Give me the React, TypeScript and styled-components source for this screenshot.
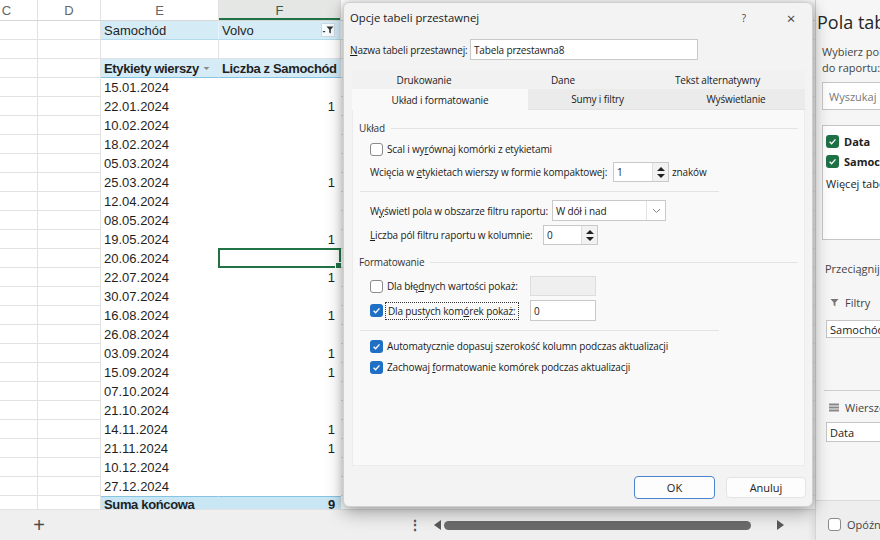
import React from "react";
import styled, { createGlobalStyle, css } from "styled-components";

const GlobalStyle = createGlobalStyle`
  html, body {
    margin: 0;
    padding: 0;
  }
  body {
    width: 880px;
    height: 540px;
    overflow: hidden;
    background: #efefef;
    font-family: "Liberation Sans", Arial, sans-serif;
  }
`;

const Screen = styled.div`
  position: relative;
  width: 880px;
  height: 540px;
  overflow: hidden;
  display: flex;
`;

/* ---------- spreadsheet ---------- */

const Workbook = styled.div`
  width: 815px;
  flex-shrink: 0;
  display: flex;
  flex-direction: column;
`;

const SheetViewport = styled.div`
  height: 509px;
  overflow: hidden;
  background: #ffffff;
`;

// scrolled canvas: column C is only partly visible
const SheetGrid = styled.div`
  margin-left: -24px;
`;

const COLS = "62px 63px 118px 122px 520px";

const HeaderRow = styled.div`
  display: grid;
  grid-template-columns: ${COLS};
  height: 21px;
  box-sizing: border-box;
  border-bottom: 1px solid #d6d6d6;
`;

const ColHead = styled.div<{ $active?: boolean }>`
  display: flex;
  align-items: center;
  justify-content: center;
  font-size: 13px;
  color: #666666;
  border-right: 1px solid #e1e1e1;
  ${(p) =>
    p.$active &&
    css`
      background: #e4e7e4;
      color: #3b5a46;
      box-shadow: inset 0 -2px 0 #217346;
    `}
`;

const Row = styled.div`
  display: grid;
  grid-template-columns: ${COLS};
  height: 19px;
`;

type Tone = "grid" | "data" | "filter" | "head" | "total";

const Cell = styled.div<{ $tone?: Tone; $right?: boolean }>`
  position: relative;
  box-sizing: border-box;
  display: flex;
  align-items: center;
  justify-content: ${(p) => (p.$right ? "flex-end" : "flex-start")};
  padding: 0 5px 0 3px;
  font-size: 13px;
  color: #1f1f1f;
  white-space: nowrap;
  border-right: 1px solid #e2e2e2;
  border-bottom: 1px solid #e2e2e2;
  ${(p) =>
    p.$tone === "data" &&
    css`
      border-color: #ffffff;
    `}
  ${(p) =>
    p.$tone === "filter" &&
    css`
      background: #d5ecf7;
      border-right-color: #e6f4fb;
      border-bottom-color: #b3dbee;
    `}
  ${(p) =>
    p.$tone === "head" &&
    css`
      background: #d5ecf7;
      font-weight: bold;
      letter-spacing: -0.35px;
      border-right-color: #d5ecf7;
      border-bottom-color: #86c4e3;
    `}
  ${(p) =>
    p.$tone === "total" &&
    css`
      background: #c9e6f4;
      font-weight: bold;
      letter-spacing: -0.35px;
      border-top: 1px solid #86c4e3;
      border-right-color: #c9e6f4;
      padding-bottom: 2px;
    `}
`;

const CellButton = styled.span<{ $boxed?: boolean }>`
  margin-left: auto;
  width: 14px;
  height: 14px;
  display: flex;
  align-items: center;
  justify-content: center;
  box-sizing: border-box;
  ${(p) =>
    p.$boxed &&
    css`
      background: #f6fbfe;
      border: 1px solid #c9d9e2;
    `}
`;

const SelectionBox = styled.span`
  position: absolute;
  inset: -1px -1px -1px -1px;
  border: 2px solid #217346;
  pointer-events: none;
`;

const FillHandle = styled.span`
  position: absolute;
  right: -3px;
  bottom: -3px;
  width: 5px;
  height: 5px;
  background: #217346;
  border: 1px solid #ffffff;
`;

const BottomBar = styled.div`
  flex: 1;
  display: flex;
  align-items: center;
  background: #efefef;
  border-top: 1px solid #e2e2e2;
  color: #555555;
`;

const AddSheet = styled.span`
  width: 20px;
  margin-left: 29px;
  text-align: center;
  font-size: 20px;
  font-weight: 300;
  color: #4a4a4a;
  line-height: 20px;
`;

const ScrollGroup = styled.div`
  margin-left: auto;
  width: 407px;
  display: flex;
  align-items: center;
`;

const Dots = styled.span`
  width: 8px;
  text-align: center;
  font-size: 14px;
  font-weight: bold;
  color: #555;
`;

const Arrow = styled.span<{ $dir: "left" | "right"; $gap: number }>`
  margin-left: ${(p) => p.$gap}px;
  width: 0;
  height: 0;
  border-top: 5px solid transparent;
  border-bottom: 5px solid transparent;
  ${(p) =>
    p.$dir === "left"
      ? css`
          border-right: 7px solid #5a5a5a;
        `
      : css`
          border-left: 7px solid #5a5a5a;
        `}
`;

const ScrollThumb = styled.span`
  margin-left: 3px;
  width: 307px;
  height: 9px;
  border-radius: 5px;
  background: #6b6b6b;
`;

/* ---------- field list pane ---------- */

const FieldPane = styled.aside`
  width: 65px;
  flex-shrink: 0;
  box-sizing: border-box;
  background: #f6f6f6;
  border-left: 1px solid #d4d4d4;
  box-shadow: -3px 0 6px rgba(0, 0, 0, 0.08);
  overflow: hidden;
  display: flex;
  flex-direction: column;
  font-family: "Open Sans", "Noto Sans", sans-serif;
  color: #333333;
  white-space: nowrap;
`;

const PaneBody = styled.div`
  width: 280px;
  padding-left: 6px;
  display: flex;
  flex-direction: column;
`;

const PaneTitle = styled.div`
  margin: 9px 0 0 -5px;
  font-size: 18px;
  line-height: 26px;
  color: #262626;
`;

const PaneHint = styled.div`
  margin-top: 9px;
  font-size: 11px;
  line-height: 16px;
  color: #444;
`;

const SearchBox = styled.div`
  margin-top: 6px;
  height: 28px;
  box-sizing: border-box;
  border: 1px solid #c6c6c6;
  background: #ffffff;
  display: flex;
  align-items: center;
  padding-left: 6px;
  font-size: 11px;
  color: #777;
`;

const FieldList = styled.div`
  margin-top: 15px;
  height: 115px;
  box-sizing: border-box;
  border: 1px solid #c6c6c6;
  background: #ffffff;
  padding: 5px 0 0 3px;
`;

const FieldItem = styled.div<{ $bold?: boolean; $top?: number }>`
  height: 20px;
  margin-top: ${(p) => p.$top ?? 0}px;
  display: flex;
  align-items: center;
  gap: 5px;
  font-size: 11px;
  font-weight: ${(p) => (p.$bold ? 700 : 400)};
  color: #222;
`;

const AreaLabel = styled.div<{ $top: number; $indent: number }>`
  margin-top: ${(p) => p.$top}px;
  padding-left: ${(p) => p.$indent}px;
  height: 18px;
  display: flex;
  align-items: center;
  gap: 6px;
  font-size: 11px;
  color: #444;
`;

const AreaBox = styled.div<{ $top: number; $h: number }>`
  margin: ${(p) => p.$top}px 0 0 4px;
  height: ${(p) => p.$h}px;
  box-sizing: border-box;
  border: 1px solid #c6c6c6;
  background: #ffffff;
  display: flex;
  align-items: center;
  padding-left: 3px;
  font-size: 11px;
  color: #222;
`;

const PaneRule = styled.div`
  margin: 52px 0 0 2px;
  height: 1px;
  background: #cfcfcf;
`;

const PaneFooter = styled.div`
  margin-top: auto;
  height: 40px;
  box-sizing: border-box;
  border-top: 1px solid #dadada;
  background: #eeeeee;
  display: flex;
  align-items: center;
  gap: 6px;
  padding: 8px 0 0 12px;
  font-size: 11px;
  color: #444;
`;

/* ---------- dialog ---------- */

const Dialog = styled.div`
  position: absolute;
  left: 343px;
  top: 2px;
  width: 470px;
  height: 505px;
  box-sizing: border-box;
  background: #f3f3f3;
  border: 1px solid #d0d0d0;
  border-radius: 6px;
  box-shadow: 0 6px 18px rgba(0, 0, 0, 0.3), 0 0 8px rgba(0, 0, 0, 0.18);
  display: flex;
  flex-direction: column;
  font-family: "Open Sans", "Noto Sans", sans-serif;
  font-size: 10px;
  letter-spacing: -0.15px;
  color: #1b1b1b;
`;

const TitleBar = styled.div`
  height: 29px;
  display: flex;
  align-items: center;
  padding: 0 6px 0 6px;
  font-size: 11.3px;
  letter-spacing: 0;
  color: #1a1a1a;
`;

const TitleButton = styled.span<{ $size: number; $gap?: number }>`
  width: 30px;
  margin-right: ${(p) => p.$gap ?? 0}px;
  text-align: center;
  font-size: ${(p) => p.$size}px;
  color: #444;
`;

const Spacer = styled.span`
  flex: 1;
`;

const NameRow = styled.div`
  margin-top: 7px;
  height: 21px;
  display: flex;
  align-items: center;
  padding-left: 6px;
`;

const TextField = styled.div<{ $w: number; $h?: number; $disabled?: boolean }>`
  width: ${(p) => p.$w}px;
  height: ${(p) => p.$h ?? 20}px;
  box-sizing: border-box;
  flex-shrink: 0;
  display: flex;
  align-items: center;
  padding-left: 3px;
  background: ${(p) => (p.$disabled ? "#efefef" : "#ffffff")};
  border: 1px solid ${(p) => (p.$disabled ? "#dddddd" : "#c9c9c9")};
`;

const Tabs = styled.div`
  margin: 10px 7px 0 8px;
`;

const TabRow = styled.div<{ $h: number }>`
  display: flex;
  height: ${(p) => p.$h}px;
`;

const Tab = styled.div<{ $w: number; $state: "back" | "idle" | "active" }>`
  width: ${(p) => p.$w}px;
  flex-shrink: 0;
  display: flex;
  align-items: center;
  justify-content: center;
  color: #222;
  box-sizing: border-box;
  ${(p) =>
    p.$state === "back" &&
    css`
      background: #f1f1f1;
    `}
  ${(p) =>
    p.$state === "idle" &&
    css`
      background: #ebebeb;
      border-bottom: 1px solid #e2e2e2;
    `}
  ${(p) =>
    p.$state === "active" &&
    css`
      background: #f9f9f9;
    `}
`;

const Panel = styled.div`
  margin: 0 7px 0 8px;
  height: 356px;
  box-sizing: border-box;
  background: #f9f9f9;
  border: 1px solid #ececec;
  border-top: none;
  padding: 0 6px;
  display: flex;
  flex-direction: column;
`;

const GroupTitle = styled.div<{ $top: number }>`
  margin-top: ${(p) => p.$top}px;
  height: 16px;
  display: flex;
  align-items: center;
  gap: 6px;
  color: #333;
  &::after {
    content: "";
    flex: 1;
    border-top: 1px solid #e3e3e3;
  }
`;

const OptionRow = styled.div<{ $top: number; $h?: number; $gap?: number }>`
  margin-top: ${(p) => p.$top}px;
  height: ${(p) => p.$h ?? 20}px;
  display: flex;
  align-items: center;
  gap: ${(p) => p.$gap ?? 4}px;
  padding-left: 11px;
`;

const Label = styled.span<{ $w?: number; $after?: number }>`
  min-width: ${(p) => (p.$w ? `${p.$w}px` : "0")};
  margin-left: ${(p) => p.$after ?? 0}px;
  flex-shrink: 0;
  white-space: nowrap;
`;

const FocusText = styled.span`
  margin-left: -2px;
  padding: 1px 2px;
  border: 1px dotted #333;
`;

const Divider = styled.div<{ $top: number }>`
  margin: ${(p) => p.$top}px 79px 0 1px;
  height: 1px;
  background: #e3e3e3;
`;

const Box = styled.span<{ $checked?: boolean; $green?: boolean }>`
  width: 13px;
  height: 13px;
  flex-shrink: 0;
  box-sizing: border-box;
  border-radius: 3px;
  display: inline-flex;
  align-items: center;
  justify-content: center;
  background: ${(p) => (p.$checked ? (p.$green ? "#1e7145" : "#1f6fc5") : "#ffffff")};
  border: 1px solid ${(p) => (p.$checked ? "transparent" : "#8a8a8a")};
`;

const SpinField = styled.div<{ $w: number }>`
  width: ${(p) => p.$w}px;
  height: 20px;
  flex-shrink: 0;
  box-sizing: border-box;
  display: flex;
  background: #ffffff;
  border: 1px solid #c9c9c9;
`;

const FieldValue = styled.span`
  flex: 1;
  display: flex;
  align-items: center;
  padding-left: 3px;
`;

const SpinButtons = styled.span`
  width: 15px;
  display: flex;
  flex-direction: column;
  align-items: center;
  justify-content: center;
  gap: 3px;
  background: #f2f2f2;
  border-left: 1px solid #dedede;
`;

const Tri = styled.span<{ $up?: boolean }>`
  width: 0;
  height: 0;
  border-left: 4px solid transparent;
  border-right: 4px solid transparent;
  ${(p) =>
    p.$up
      ? css`
          border-bottom: 4px solid #222;
        `
      : css`
          border-top: 4px solid #222;
        `}
`;

const SelectField = styled.div`
  width: 114px;
  height: 21px;
  flex-shrink: 0;
  box-sizing: border-box;
  display: flex;
  background: #ffffff;
  border: 1px solid #c9c9c9;
`;

const SelectChevron = styled.span`
  width: 18px;
  display: flex;
  align-items: center;
  justify-content: center;
  border-left: 1px solid #e3e3e3;
`;

const Footer = styled.div`
  margin-top: 10px;
  display: flex;
  justify-content: flex-end;
  align-items: center;
  gap: 11px;
  padding-right: 6px;
  height: 23px;
`;

const Button = styled.button<{ $primary?: boolean }>`
  width: ${(p) => (p.$primary ? 81 : 80)}px;
  height: ${(p) => (p.$primary ? 23 : 21)}px;
  border-radius: 4px;
  background: #fdfdfd;
  border: 1px solid ${(p) => (p.$primary ? "#4a84cf" : "#e4e4e4")};
  font-family: inherit;
  font-size: 11px;
  color: #222;
  padding: 0;
`;

/* ---------- drawings ---------- */

const Check = ({ size = 9 }: { size?: number }) => (
  <svg width={size} height={size} viewBox="0 0 10 10">
    <polyline points="1.8,5.2 4,7.4 8.3,2.6" fill="none" stroke="#fff" strokeWidth="1.5" />
  </svg>
);

const Funnel = ({ color = "#555" }: { color?: string }) => (
  <svg width="9" height="9" viewBox="0 0 10 10">
    <path d="M0.5 1h9L6 5v4.2L4 8V5z" fill={color} />
  </svg>
);

const FilterGlyph = () => (
  <svg width="12" height="10" viewBox="0 0 12 10">
    <path d="M0.5 6h3L2 7.8z" fill="#333" />
    <path d="M4.5 1.5h7L8.8 4.6v4L7.2 7.6V4.6z" fill="#333" />
  </svg>
);

const SmallArrow = () => (
  <svg width="7" height="5" viewBox="0 0 7 5">
    <path d="M0.5 1h6L3.5 4z" fill="#8a8a8a" />
  </svg>
);

const Chevron = () => (
  <svg width="9" height="6" viewBox="0 0 9 6">
    <polyline points="1,1 4.5,4.5 8,1" fill="none" stroke="#888" strokeWidth="1" />
  </svg>
);

const RowsGlyph = () => (
  <svg width="10" height="9" viewBox="0 0 10 9">
    <rect x="0" y="0.5" width="10" height="2" fill="#888" />
    <rect x="0" y="3.5" width="10" height="2" fill="#888" />
    <rect x="0" y="6.5" width="10" height="2" fill="#888" />
  </svg>
);

/* ---------- data ---------- */

const dates: [string, string][] = [
  ["15.01.2024", ""],
  ["22.01.2024", "1"],
  ["10.02.2024", ""],
  ["18.02.2024", ""],
  ["05.03.2024", ""],
  ["25.03.2024", "1"],
  ["12.04.2024", ""],
  ["08.05.2024", ""],
  ["19.05.2024", "1"],
  ["20.06.2024", ""],
  ["22.07.2024", "1"],
  ["30.07.2024", ""],
  ["16.08.2024", "1"],
  ["26.08.2024", ""],
  ["03.09.2024", "1"],
  ["15.09.2024", "1"],
  ["07.10.2024", ""],
  ["21.10.2024", ""],
  ["14.11.2024", "1"],
  ["21.11.2024", "1"],
  ["10.12.2024", ""],
  ["27.12.2024", ""],
];

const SELECTED = "20.06.2024";

function Sheet() {
  return (
    <SheetViewport>
      <SheetGrid>
        <HeaderRow>
          <ColHead>C</ColHead>
          <ColHead>D</ColHead>
          <ColHead>E</ColHead>
          <ColHead $active>F</ColHead>
          <ColHead />
        </HeaderRow>

        <Row>
          <Cell />
          <Cell />
          <Cell $tone="filter">Samochód</Cell>
          <Cell $tone="filter">
            Volvo
            <CellButton $boxed>
              <FilterGlyph />
            </CellButton>
          </Cell>
          <Cell />
        </Row>
        <Row>
          <Cell />
          <Cell />
          <Cell />
          <Cell />
          <Cell />
        </Row>
        <Row>
          <Cell />
          <Cell />
          <Cell $tone="head">
            Etykiety wierszy
            <CellButton>
              <SmallArrow />
            </CellButton>
          </Cell>
          <Cell $tone="head">Liczba z Samochód</Cell>
          <Cell />
        </Row>

        {dates.map(([d, n]) => (
          <Row key={d}>
            <Cell />
            <Cell />
            <Cell $tone="data">{d}</Cell>
            <Cell $tone="data" $right>
              {n}
              {d === SELECTED && (
                <SelectionBox>
                  <FillHandle />
                </SelectionBox>
              )}
            </Cell>
            <Cell />
          </Row>
        ))}

        <Row>
          <Cell />
          <Cell />
          <Cell $tone="total">Suma końcowa</Cell>
          <Cell $tone="total" $right>
            9
          </Cell>
          <Cell />
        </Row>
      </SheetGrid>
    </SheetViewport>
  );
}

function PivotOptionsDialog() {
  return (
    <Dialog>
      <TitleBar>
        Opcje tabeli przestawnej
        <Spacer />
        <TitleButton $size={10} $gap={17}>
          ?
        </TitleButton>
        <TitleButton $size={15}>×</TitleButton>
      </TitleBar>

      <NameRow>
        <Label $w={120}>
          <u>N</u>azwa tabeli przestawnej:
        </Label>
        <TextField $w={228} $h={21}>
          Tabela przestawna8
        </TextField>
      </NameRow>

      <Tabs>
        <TabRow $h={19}>
          <Tab $w={144} $state="back">Drukowanie</Tab>
          <Tab $w={134} $state="back">Dane</Tab>
          <Tab $w={175} $state="back">Tekst alternatywny</Tab>
        </TabRow>
        <TabRow $h={21}>
          <Tab $w={176} $state="active">Układ i formatowanie</Tab>
          <Tab $w={139} $state="idle">Sumy i filtry</Tab>
          <Tab $w={138} $state="idle">Wyświetlanie</Tab>
        </TabRow>
      </Tabs>

      <Panel>
        <GroupTitle $top={10}>Układ</GroupTitle>
        <OptionRow $top={3}>
          <Box />
          <Label>
            Scal i wy<u>r</u>ównaj komórki z etykietami
          </Label>
        </OptionRow>
        <OptionRow $top={3} $gap={0}>
          <Label $w={243}>
            Wcięcia w <u>e</u>tykietach wierszy w formie kompaktowej:
          </Label>
          <SpinField $w={56}>
            <FieldValue>1</FieldValue>
            <SpinButtons>
              <Tri $up />
              <Tri />
            </SpinButtons>
          </SpinField>
          <Label $after={3}>znaków</Label>
        </OptionRow>

        <Divider $top={9} />

        <OptionRow $top={8} $h={21} $gap={0}>
          <Label $w={182}>
            W<u>y</u>świetl pola w obszarze filtru raportu:
          </Label>
          <SelectField>
            <FieldValue>W dół i nad</FieldValue>
            <SelectChevron>
              <Chevron />
            </SelectChevron>
          </SelectField>
        </OptionRow>
        <OptionRow $top={4} $gap={0}>
          <Label $w={173}>
            <u>L</u>iczba pól filtru raportu w kolumnie:
          </Label>
          <SpinField $w={55}>
            <FieldValue>0</FieldValue>
            <SpinButtons>
              <Tri $up />
              <Tri />
            </SpinButtons>
          </SpinField>
        </OptionRow>

        <GroupTitle $top={9}>Formatowanie</GroupTitle>
        <OptionRow $top={6}>
          <Box />
          <Label $w={139}>
            Dla błę<u>d</u>nych wartości pokaż:
          </Label>
          <TextField $w={66} $disabled />
        </OptionRow>
        <OptionRow $top={4} $h={21}>
          <Box $checked>
            <Check />
          </Box>
          <Label $w={139}>
            <FocusText>
              Dla pustych kom<u>ó</u>rek pokaż:
            </FocusText>
          </Label>
          <TextField $w={66} $h={21}>
            0
          </TextField>
        </OptionRow>

        <Divider $top={9} />

        <OptionRow $top={5}>
          <Box $checked>
            <Check />
          </Box>
          <Label>Automatycznie dopasuj szerokość kolumn podczas aktualizacji</Label>
        </OptionRow>
        <OptionRow $top={1}>
          <Box $checked>
            <Check />
          </Box>
          <Label>
            Zachowaj <u>f</u>ormatowanie komórek podczas aktualizacji
          </Label>
        </OptionRow>
      </Panel>

      <Footer>
        <Button $primary>OK</Button>
        <Button>Anuluj</Button>
      </Footer>
    </Dialog>
  );
}

function FieldListPane() {
  return (
    <FieldPane>
      <PaneBody>
        <PaneTitle>Pola tabeli przestawnej</PaneTitle>
        <PaneHint>
          Wybierz pola do dodania
          <br />
          do raportu:
        </PaneHint>
        <SearchBox>Wyszukaj</SearchBox>
        <FieldList>
          <FieldItem $bold>
            <Box $checked $green>
              <Check />
            </Box>
            Data
          </FieldItem>
          <FieldItem $bold>
            <Box $checked $green>
              <Check />
            </Box>
            Samochód
          </FieldItem>
          <FieldItem $top={2}>Więcej tabel...</FieldItem>
        </FieldList>

        <AreaLabel $top={19} $indent={3}>
          Przeciągnij pola między obszarami poniżej:
        </AreaLabel>
        <AreaLabel $top={16} $indent={8}>
          <Funnel color="#777" />
          Filtry
        </AreaLabel>
        <AreaBox $top={9} $h={18}>
          Samochód
        </AreaBox>
        <PaneRule />
        <AreaLabel $top={7} $indent={7}>
          <RowsGlyph />
          Wiersze
        </AreaLabel>
        <AreaBox $top={6} $h={20}>
          Data
        </AreaBox>
      </PaneBody>
      <PaneFooter>
        <Box />
        Opóźnij aktualizację układu
      </PaneFooter>
    </FieldPane>
  );
}

export default function App() {
  return (
    <Screen>
      <GlobalStyle />
      <Workbook>
        <Sheet />
        <BottomBar>
          <AddSheet>+</AddSheet>
          <ScrollGroup>
            <Dots>⋮</Dots>
            <Arrow $dir="left" $gap={18} />
            <ScrollThumb />
            <Arrow $dir="right" $gap={26} />
          </ScrollGroup>
        </BottomBar>
      </Workbook>
      <FieldListPane />
      <PivotOptionsDialog />
    </Screen>
  );
}
